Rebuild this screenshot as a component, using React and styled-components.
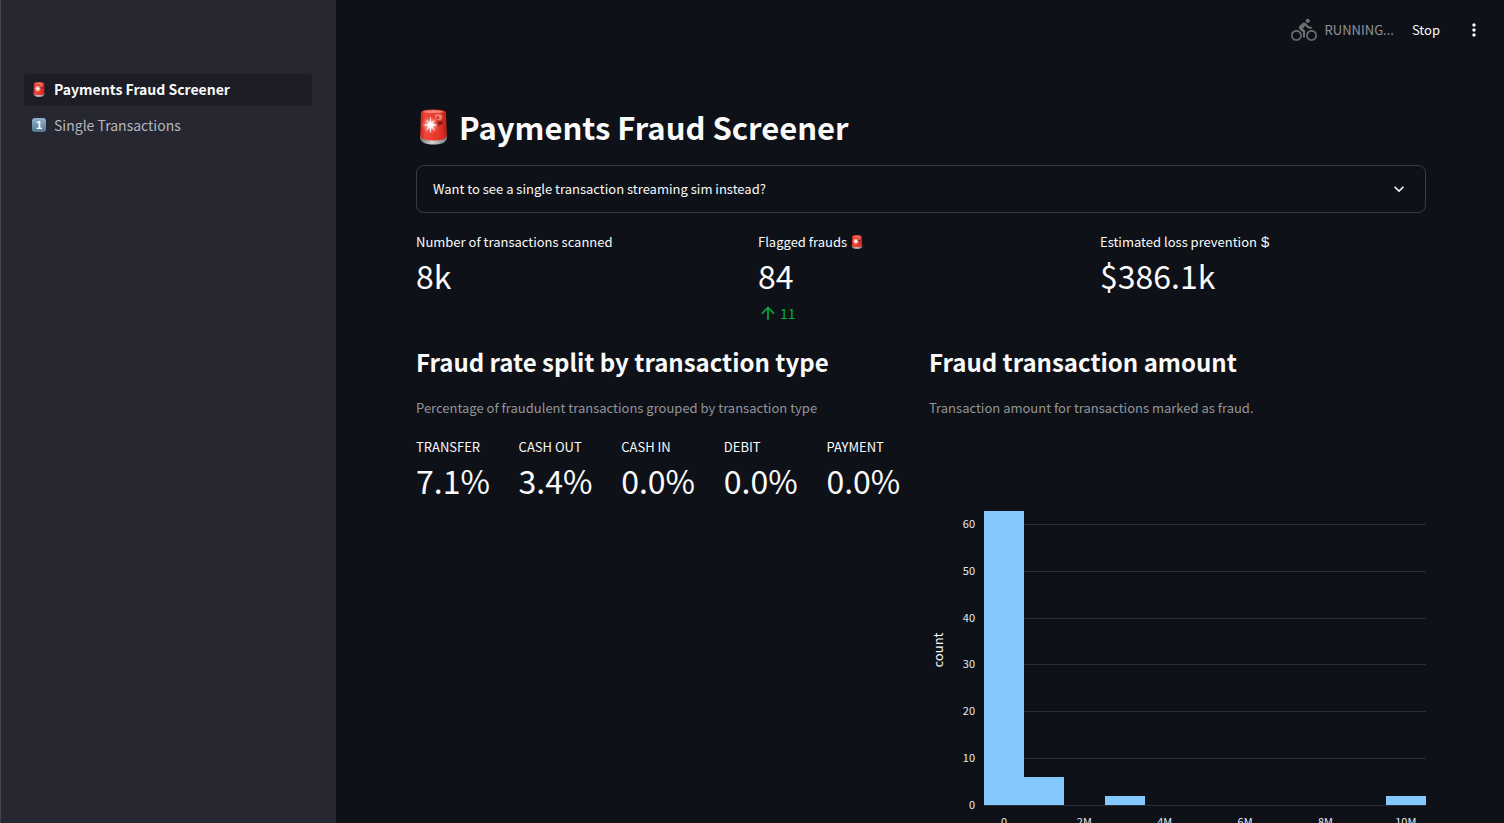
import React from "react";
import styled, { createGlobalStyle } from "styled-components";
import { MdArrowUpward, MdDirectionsBike, MdExpandMore, MdMoreVert } from "react-icons/md";

const GlobalStyle = createGlobalStyle`
  *, *::before, *::after { box-sizing: border-box; }
  body {
    margin: 0;
    background: #0e1117;
    color: #fafafa;
    font-family: "Noto Sans CJK SC", "Noto Sans", sans-serif;
    font-size: 13px;
    line-height: 20px;
  }
  h1, h2, p, dl, dt, dd, ul { margin: 0; padding: 0; }
  button { font: inherit; color: inherit; background: none; border: 0; padding: 0; cursor: pointer; }
`;

const Shell = styled.div`
  display: grid;
  grid-template-columns: 336px minmax(0, 1fr);
  height: 100vh;
  overflow: hidden;
`;

const Sidebar = styled.aside`
  background: #262730;
  border-left: 1px solid #42434b;
  padding: 74px 24px 24px 23px;
`;

const NavList = styled.ul`
  list-style: none;
  display: grid;
  gap: 4px;
`;

const NavLink = styled.a`
  display: flex;
  align-items: center;
  gap: 8px;
  height: 32px;
  padding: 0 8px 2px;
  border-radius: 4px;
  font-size: 14px;
  text-decoration: none;
  color: ${(p) => (p.$active ? "#fafafa" : "#b5b6bf")};
  font-weight: ${(p) => (p.$active ? 700 : 400)};
  background: ${(p) => (p.$active ? "#1c1d25" : "transparent")};
`;

const Main = styled.main`
  height: 100vh;
  overflow-y: auto;
  scrollbar-width: none;
`;

const Toolbar = styled.header`
  display: flex;
  align-items: center;
  justify-content: flex-end;
  height: 60px;
  padding: 0 20px;
`;

const Status = styled.div`
  display: flex;
  align-items: center;
  gap: 8px;
  color: #92949a;
  margin-right: 18px;
  svg { color: #6c6e72; }
`;

const StopButton = styled.button`
  margin-right: 24px;
`;

const MenuButton = styled.button`
  display: flex;
`;

const Content = styled.div`
  padding: 45px 78px 40px 80px;
`;

const Title = styled.h1`
  display: flex;
  align-items: center;
  gap: 8px;
  font-size: 31px;
  line-height: 43px;
  font-weight: 700;
`;

const Expander = styled.button`
  display: flex;
  align-items: center;
  justify-content: space-between;
  width: 100%;
  height: 48px;
  margin-top: 17px;
  padding: 0 16px;
  border: 1px solid #3a3c42;
  border-radius: 8px;
`;

const Metrics = styled.dl`
  display: grid;
  grid-template-columns: repeat(${(p) => p.$columns}, minmax(0, 1fr));
  gap: 16px;
`;

const MetricBox = styled.div`
  white-space: nowrap;
`;

const MetricLabel = styled.dt`
  display: flex;
  align-items: center;
  gap: 4px;
  height: 20px;
`;

const DollarMark = styled.span`
  font-family: "Liberation Sans", Arial, sans-serif;
  font-size: 15px;
`;

const MetricValue = styled.dd`
  height: 50px;
  font-size: 32px;
  line-height: 46px;
`;

const Delta = styled.dd`
  display: flex;
  align-items: center;
  gap: 2px;
  height: 22px;
  font-size: 14px;
  color: #09ab3b;
`;

const Summary = styled.section`
  margin-top: 19px;
`;

const Split = styled.div`
  display: grid;
  grid-template-columns: repeat(2, minmax(0, 1fr));
  gap: 16px;
  margin-top: 22px;
`;

const Heading = styled.h2`
  font-size: 24px;
  line-height: 32px;
  font-weight: 700;
  white-space: nowrap;
`;

const Caption = styled.p`
  margin: 20px 0 19px;
  color: #93959a;
`;

const ChartSvg = styled.svg`
  display: block;
  width: 100%;
  height: auto;
  text { fill: #e6eaf1; font-size: 11px; }
  .axis { font-size: 13px; fill: #fafafa; }
`;

function Siren({ width, height }) {
  return (
    <svg width={width} height={height} viewBox="0 0 28 36" aria-hidden="true">
      <defs>
        <linearGradient id="base" x1="0" x2="1">
          <stop offset="0" stopColor="#6f7477" />
          <stop offset="0.45" stopColor="#d5d6d6" />
          <stop offset="1" stopColor="#777b7e" />
        </linearGradient>
        <linearGradient id="lamp" x1="0" x2="1">
          <stop offset="0" stopColor="#c9261c" />
          <stop offset="0.2" stopColor="#f0473a" />
          <stop offset="0.75" stopColor="#e63226" />
          <stop offset="1" stopColor="#b71f18" />
        </linearGradient>
        <radialGradient id="glow">
          <stop offset="0" stopColor="#fff" />
          <stop offset="0.35" stopColor="#ffc5bd" stopOpacity="0.8" />
          <stop offset="1" stopColor="#ff7468" stopOpacity="0" />
        </radialGradient>
      </defs>
      <path d="M0.5 28 Q0.5 35.5 14 35.5 Q27.500 35.500 27.500 28 L27 25 H1Z" fill="url(#base)" />
      <path d="M1.500 3.500 Q2 0.500 14 0.500 Q26 0.500 26.500 3.500 L27.300 27 Q26.500 31.500 14 31.500 Q1.500 31.500 0.700 27Z" fill="url(#lamp)" />
      <path d="M2.500 3 Q14 -0.500 25.500 3 Q14 5 2.500 3Z" fill="#f58c80" />
      <path d="M15 6 Q20 3.500 23 7 L21.500 11 Q18 12 16 9Z" fill="#f47b6f" />
      <path d="M16 13 L24 12 L23 15 L17 18Z M17 7 L20 9 L18 10Z" fill="#8e1712" />
      <circle cx="11" cy="16" r="9" fill="url(#glow)" />
      <path d="M11 7 L11.800 13.500 L16 10 L12.800 14.800 L19 16 L12.800 17.200 L16 22 L11.800 18.500 L11 25 L10.200 18.500 L6 22 L9.200 17.200 L3 16 L9.200 14.800 L6 10 L10.200 13.500Z" fill="#fff" opacity="0.9" />
    </svg>
  );
}

const KeycapBox = styled.span`
  display: flex;
  align-items: center;
  justify-content: center;
  width: 14px;
  height: 14px;
  border-radius: 3px;
  background: linear-gradient(#91b5cf, #55778f);
  color: #fff;
  font: 700 11px/14px "Liberation Sans", sans-serif;
`;

const IconSlot = styled.span`
  display: flex;
  justify-content: center;
  width: 14px;
`;

function Metric({ label, value, mark, delta }) {
  return (
    <MetricBox>
      <MetricLabel>{label}{mark}</MetricLabel>
      <MetricValue>{value}</MetricValue>
      {delta && <Delta><MdArrowUpward size={20} aria-hidden="true" />{delta}</Delta>}
    </MetricBox>
  );
}

const rates = [
  ["TRANSFER", "7.1%"],
  ["CASH OUT", "3.4%"],
  ["CASH IN", "0.0%"],
  ["DEBIT", "0.0%"],
  ["PAYMENT", "0.0%"],
];

const bins = [[0, 63], [1, 6], [3, 2], [10, 2]];
const plot = { left: 55, right: 497, base: 368, perCount: 4.67, perMillion: 40.18 };

function Histogram() {
  return (
    <ChartSvg viewBox="0 0 497 420" role="img" aria-label="Histogram of fraud transaction amounts">
      {[0, 10, 20, 30, 40, 50, 60].map((n) => {
        const y = Math.floor(plot.base - n * plot.perCount);
        return (
          <g key={n}>
            <rect x={plot.left} y={y} width={plot.right - plot.left} height="1" fill="#2b2e36" />
            <text x="46" y={y + 4} textAnchor="end">{n}</text>
          </g>
        );
      })}
      {bins.map(([million, count]) => {
        const y = Math.round(plot.base - count * plot.perCount);
        return (
          <rect
            key={million}
            x={Math.round(plot.left + million * plot.perMillion)}
            y={y}
            width="40"
            height={plot.base - y}
            fill="#83c9ff"
          />
        );
      })}
      {[0, 2, 4, 6, 8, 10].map((m) => (
        <text key={m} x={plot.left + 20 + m * plot.perMillion} y={plot.base + 21} textAnchor="middle">
          {m ? `${m}M` : "0"}
        </text>
      ))}
      <text className="axis" transform="translate(14 213) rotate(-90)" textAnchor="middle">count</text>
    </ChartSvg>
  );
}

export default function App() {
  return (
    <>
      <GlobalStyle />
      <Shell>
        <Sidebar>
          <nav aria-label="Pages">
            <NavList>
              <li>
                <NavLink href="#screener" $active aria-current="page">
                  <IconSlot><Siren width={12} height={15} /></IconSlot>
                  Payments Fraud Screener
                </NavLink>
              </li>
              <li>
                <NavLink href="#single">
                  <KeycapBox aria-hidden="true">1</KeycapBox>
                  Single Transactions
                </NavLink>
              </li>
            </NavList>
          </nav>
        </Sidebar>
        <Main>
          <Toolbar>
            <Status role="status">
              <MdDirectionsBike size={26} aria-hidden="true" />
              RUNNING...
            </Status>
            <StopButton type="button">Stop</StopButton>
            <MenuButton type="button" aria-label="Main menu"><MdMoreVert size={20} /></MenuButton>
          </Toolbar>
          <Content>
            <Title><Siren width={35} height={36} />Payments Fraud Screener</Title>
            <Expander type="button" aria-expanded="false">
              Want to see a single transaction streaming sim instead?
              <MdExpandMore size={20} aria-hidden="true" />
            </Expander>
            <Summary>
              <Metrics $columns={3}>
                <Metric label="Number of transactions scanned" value="8k" />
                <Metric label="Flagged frauds" value="84" delta="11" mark={<Siren width={12} height={14} />} />
                <Metric label="Estimated loss prevention" value="$386.1k" mark={<DollarMark>$</DollarMark>} />
              </Metrics>
            </Summary>
            <Split>
              <section>
                <Heading>Fraud rate split by transaction type</Heading>
                <Caption>Percentage of fraudulent transactions grouped by transaction type</Caption>
                <Metrics $columns={5}>
                  {rates.map(([label, value]) => <Metric key={label} label={label} value={value} />)}
                </Metrics>
              </section>
              <section>
                <Heading>Fraud transaction amount</Heading>
                <Caption>Transaction amount for transactions marked as fraud.</Caption>
                <Histogram />
              </section>
            </Split>
          </Content>
        </Main>
      </Shell>
    </>
  );
}
